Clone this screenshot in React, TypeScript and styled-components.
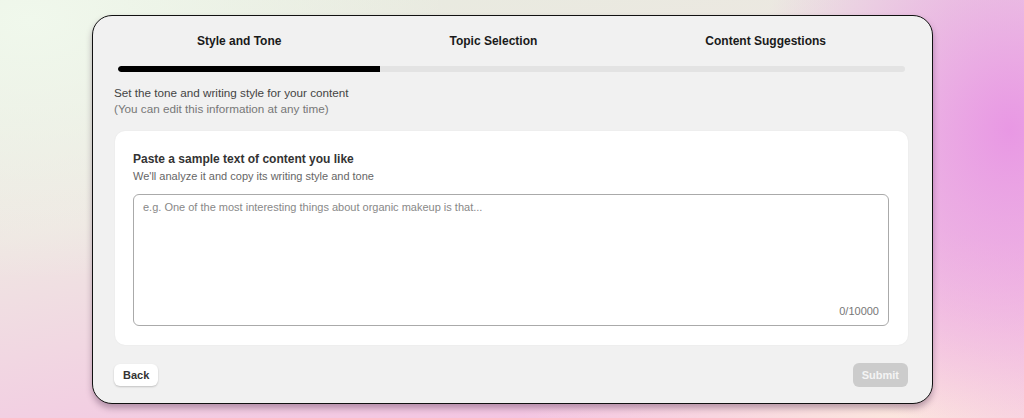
import React, { useState } from "react";
import styled, { createGlobalStyle } from "styled-components";

const GlobalStyle = createGlobalStyle`
  html, body {
    margin: 0;
    padding: 0;
  }
  body {
    font-family: "Liberation Sans", Arial, sans-serif;
  }
`;

const Page = styled.div`
  width: 1024px;
  height: 418px;
  box-sizing: border-box;
  padding: 15px 91px 14px 92px;
  background:
    radial-gradient(ellipse 260px 320px at 1010px 130px, rgba(232, 148, 228, 0.95), rgba(232, 148, 228, 0) 100%),
    radial-gradient(ellipse 420px 260px at 30px 20px, rgba(240, 248, 236, 1), rgba(240, 248, 236, 0) 100%),
    radial-gradient(ellipse 380px 200px at 900px 430px, rgba(252, 232, 222, 1), rgba(252, 232, 222, 0) 100%),
    linear-gradient(170deg, #e6ecdf 0%, #efe6e2 40%, #f3c8e2 80%, #f5bde2 100%);
`;

const Card = styled.div`
  height: 100%;
  box-sizing: border-box;
  background: #f1f1f1;
  border: 1px solid #111;
  border-radius: 20px;
  box-shadow: 0 4px 6px rgba(60, 30, 60, 0.35);
  padding: 17px 27px 16px 21px;
  display: flex;
  flex-direction: column;
`;

const Steps = styled.div`
  display: flex;
  justify-content: space-between;
  padding: 0 79px 0 83px;
`;

const Step = styled.div<{ $active?: boolean }>`
  font-size: 12px;
  font-weight: 700;
  color: #1a1a1a;
  line-height: 16px;
`;

const Track = styled.div`
  margin: 17px 0 0 4px;
  height: 6px;
  border-radius: 3px;
  background: #e3e3e3;
  overflow: hidden;
`;

const Fill = styled.div`
  height: 100%;
  background: #000;
  border-radius: 3px 0 0 3px;
`;

const Intro = styled.div`
  margin-top: 13px;
  font-size: 11.7px;
  line-height: 16px;
`;

const IntroMain = styled.div`
  color: #444;
`;

const IntroNote = styled.div`
  color: #777;
`;

const Panel = styled.div`
  margin-top: 14px;
  background: #fff;
  border-radius: 10px;
  box-shadow: 0 0 2px rgba(0, 0, 0, 0.06);
  padding: 20px 19px 19px 18px;
  margin-left: 1px;
  margin-right: -3px;
`;

const PanelTitle = styled.div`
  font-size: 12px;
  font-weight: 700;
  color: #333;
  line-height: 16px;
`;

const PanelSub = styled.div`
  margin-top: 2px;
  font-size: 11px;
  color: #666;
  line-height: 14px;
`;

const Field = styled.div`
  position: relative;
  margin-top: 11px;
`;

const TextArea = styled.textarea`
  display: block;
  width: 100%;
  height: 132px;
  box-sizing: border-box;
  border: 1px solid #aaa;
  border-radius: 6px;
  padding: 6px 9px;
  font-family: "Liberation Sans", Arial, sans-serif;
  font-size: 11px;
  color: #333;
  resize: none;
  outline: none;
  &::placeholder {
    color: #888;
  }
`;

const Counter = styled.span`
  position: absolute;
  right: 10px;
  bottom: 9px;
  font-size: 11px;
  color: #777;
`;

const Footer = styled.div`
  margin-top: auto;
  display: flex;
  justify-content: space-between;
  align-items: center;
  margin-right: -3px;
`;

const Button = styled.button<{ $primary?: boolean }>`
  font-family: "Liberation Sans", Arial, sans-serif;
  font-size: 11px;
  font-weight: 700;
  border: none;
  border-radius: 6px;
  cursor: pointer;
  padding: ${(p) => (p.$primary ? "6px 9px" : "5px 9px")};
  color: ${(p) => (p.$primary ? "#f4f4f4" : "#333")};
  background: ${(p) => (p.$primary ? "#cccccc" : "#fff")};
  box-shadow: ${(p) => (p.$primary ? "none" : "0 1px 2px rgba(0,0,0,0.2)")};
`;

const steps = ["Style and Tone", "Topic Selection", "Content Suggestions"];

const App: React.FC = () => {
  const [text, setText] = useState("");
  const current = 0;
  return (
    <>
      <GlobalStyle />
      <Page>
        <Card>
          <Steps>
            {steps.map((s, i) => (
              <Step key={s} $active={i === current}>
                {s}
              </Step>
            ))}
          </Steps>
          <Track>
            <Fill style={{ width: `${((current + 1) / steps.length) * 100}%` }} />
          </Track>
          <Intro>
            <IntroMain>Set the tone and writing style for your content</IntroMain>
            <IntroNote>(You can edit this information at any time)</IntroNote>
          </Intro>
          <Panel>
            <PanelTitle>Paste a sample text of content you like</PanelTitle>
            <PanelSub>We'll analyze it and copy its writing style and tone</PanelSub>
            <Field>
              <TextArea
                value={text}
                onChange={(e) => setText(e.target.value)}
                placeholder="e.g. One of the most interesting things about organic makeup is that..."
              />
              <Counter>{text.length}/10000</Counter>
            </Field>
          </Panel>
          <Footer>
            <Button>Back</Button>
            <Button $primary disabled>
              Submit
            </Button>
          </Footer>
        </Card>
      </Page>
    </>
  );
};

export default App;
